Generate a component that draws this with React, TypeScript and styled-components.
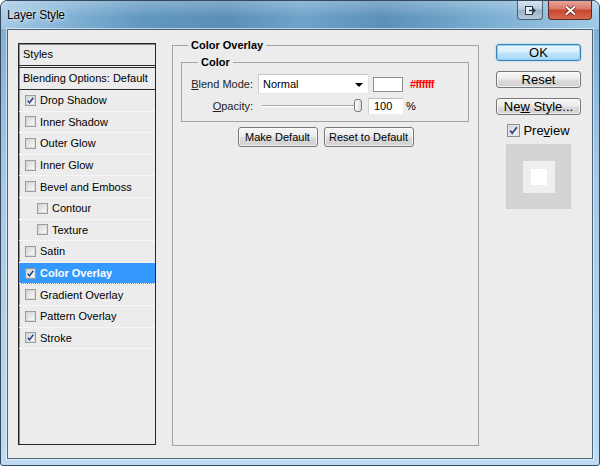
import React from 'react';
import styled, { createGlobalStyle } from 'styled-components';

const GlobalStyle = createGlobalStyle`
  html, body {
    margin: 0;
    padding: 0;
    background: #ffffff;
    overflow: hidden;
  }
  body {
    font-family: "Liberation Sans", Arial, sans-serif;
    font-size: 11px;
    color: #000;
  }
`;

type StyleItem = {
  label: string;
  checked?: boolean;
  indent?: boolean;
  active?: boolean;
};

const styleItems: StyleItem[] = [
  { label: 'Drop Shadow', checked: true },
  { label: 'Inner Shadow' },
  { label: 'Outer Glow' },
  { label: 'Inner Glow' },
  { label: 'Bevel and Emboss' },
  { label: 'Contour', indent: true },
  { label: 'Texture', indent: true },
  { label: 'Satin' },
  { label: 'Color Overlay', checked: true, active: true },
  { label: 'Gradient Overlay' },
  { label: 'Pattern Overlay' },
  { label: 'Stroke', checked: true },
];

const CheckBox = ({ checked, size }: { checked?: boolean; size: number }) => (
  <CheckSvg width={size} height={size} viewBox="0 0 13 13">
    <defs>
      <linearGradient id="cbFill" x1="0" y1="0" x2="1" y2="1">
        <stop offset="0" stopColor="#d6d6d6" />
        <stop offset="1" stopColor="#fbfbfb" />
      </linearGradient>
    </defs>
    <rect x="0.5" y="0.5" width="12" height="12" fill="#f4f4f4" stroke="#8e8f8f" />
    <rect x="2" y="2" width="9" height="9" fill="url(#cbFill)" stroke="#c4c4c4" strokeWidth="0.6" />
    {checked && (
      <path d="M3.2 6.6 L5.3 9.2 L9.8 3.2" fill="none" stroke="#2b3f8f" strokeWidth="1.7" />
    )}
  </CheckSvg>
);

const App = () => {
  return (
    <>
      <GlobalStyle />
      <Window>
        <TitleBar>
          <Title>Layer Style</Title>
          <Controls>
            <RestoreButton>
              <svg width="12" height="11" viewBox="0 0 12 11">
                <rect x="1.5" y="1.5" width="7" height="8" fill="#e9eef3" stroke="#2c3d4e" />
                <path d="M5 5.5 H11 M8.5 3 L11 5.5 L8.5 8" fill="none" stroke="#2c3d4e" strokeWidth="1.3" />
              </svg>
            </RestoreButton>
            <CloseButton>
              <svg width="13" height="11" viewBox="0 0 13 11">
                <path d="M2 1.5 L11 9.5 M11 1.5 L2 9.5" stroke="#5a1c12" strokeWidth="3.6" />
                <path d="M2 1.5 L11 9.5 M11 1.5 L2 9.5" stroke="#ffffff" strokeWidth="2" />
              </svg>
            </CloseButton>
          </Controls>
        </TitleBar>

        <Client>
          <StylesPanel>
            <PanelHeader>Styles</PanelHeader>
            <BlendingRow>Blending Options: Default</BlendingRow>
            {styleItems.map((item) => (
              <StyleRow key={item.label} $active={item.active} $indent={item.indent}>
                <CheckBox checked={item.checked} size={11} />
                <span>{item.label}</span>
              </StyleRow>
            ))}
          </StylesPanel>

          <Group $outer>
            <Legend $outer>Color Overlay</Legend>
            <Group>
              <Legend>Color</Legend>
              <FieldRow>
                <FieldLabel>
                  <u>B</u>lend Mode:
                </FieldLabel>
                <Dropdown>
                  <span>Normal</span>
                  <DropArrow />
                </Dropdown>
                <Swatch />
                <HexValue>#ffffff</HexValue>
              </FieldRow>
              <FieldRow>
                <FieldLabel>
                  <u>O</u>pacity:
                </FieldLabel>
                <Slider>
                  <SliderThumb />
                </Slider>
                <NumberBox>100</NumberBox>
                <Unit>%</Unit>
              </FieldRow>
            </Group>
            <ButtonRow>
              <PushButton $width={80}>Make Default</PushButton>
              <PushButton $width={90}>Reset to Default</PushButton>
            </ButtonRow>
          </Group>

          <SideColumn>
            <DialogButton $primary>OK</DialogButton>
            <DialogButton>Reset</DialogButton>
            <DialogButton>
              <span>
                Ne<u>w</u> Style...
              </span>
            </DialogButton>
            <PreviewToggle>
              <CheckBox checked size={13} />
              <span>
                Pre<u>v</u>iew
              </span>
            </PreviewToggle>
            <PreviewBox>
              <PreviewMid>
                <PreviewCore />
              </PreviewMid>
            </PreviewBox>
          </SideColumn>
        </Client>
      </Window>
    </>
  );
};

const Window = styled.div`
  width: 600px;
  height: 466px;
  box-sizing: border-box;
  display: flex;
  flex-direction: column;
  border: 1px solid #34495d;
  border-radius: 7px 7px 3px 3px;
  overflow: hidden;
  background: linear-gradient(180deg, #7eaad0 0%, #a3c8e6 35%, #bedbf3 100%);
`;

const TitleBar = styled.div`
  height: 28px;
  flex-shrink: 0;
  display: flex;
  align-items: flex-start;
  justify-content: space-between;
  padding-left: 6px;
  background:
    linear-gradient(180deg, rgba(255, 255, 255, 0.25), rgba(255, 255, 255, 0) 60%),
    linear-gradient(
      90deg,
      #a6cbe6 0%,
      #84b4d7 10%,
      #6097c0 24%,
      #5a8fb9 38%,
      #6fa3ca 50%,
      #5b90b9 64%,
      #77abd0 80%,
      #a2cbe7 100%
    );
`;

const Title = styled.div`
  font-size: 12px;
  line-height: 29px;
  color: #000;
  letter-spacing: -0.2px;
  text-shadow: 0 0 6px rgba(255, 255, 255, 0.95), 0 0 2px rgba(255, 255, 255, 0.8);
`;

const Controls = styled.div`
  display: flex;
  gap: 5px;
  margin-right: 7px;
`;

const CaptionButton = styled.div`
  height: 19px;
  box-sizing: border-box;
  display: flex;
  align-items: center;
  justify-content: center;
  border: 1px solid #4b5f73;
  border-top: none;
  border-radius: 0 0 4px 4px;
`;

const RestoreButton = styled(CaptionButton)`
  width: 26px;
  background: linear-gradient(180deg, #d6e4ef 0%, #b9cddd 45%, #9bb3c7 50%, #b4cadb 100%);
`;

const CloseButton = styled(CaptionButton)`
  width: 44px;
  border-color: #5b2a20;
  background: linear-gradient(180deg, #e9a595 0%, #d8786a 45%, #c7452e 50%, #d46a4e 100%);
`;

const Client = styled.div`
  flex: 1;
  margin: 0 6px 6px 6px;
  box-sizing: border-box;
  display: flex;
  align-items: flex-start;
  padding: 13px 0 0 10px;
  background: #ececec;
  border: 1px solid #4c6277;
  box-shadow: 0 0 0 1px rgba(255, 255, 255, 0.55);
`;

const StylesPanel = styled.div`
  width: 138px;
  height: 402px;
  flex-shrink: 0;
  box-sizing: border-box;
  display: flex;
  flex-direction: column;
  border: 1px solid #262626;
  box-shadow: inset 1px 1px 0 #8a8a8a;
`;

const PanelHeader = styled.div`
  height: 21px;
  line-height: 21px;
  padding-left: 4px;
  border-bottom: 1px solid #2e2e2e;
`;

const BlendingRow = styled.div`
  height: 21px;
  line-height: 21px;
  margin-top: 1px;
  padding-left: 4px;
  border-top: 1px solid #2e2e2e;
  border-bottom: 1px solid #2e2e2e;
`;

const StyleRow = styled.div<{ $active?: boolean; $indent?: boolean }>`
  height: 20.6px;
  flex-shrink: 0;
  display: flex;
  align-items: center;
  gap: 4px;
  padding-left: ${(p) => (p.$indent ? 18 : 6)}px;
  border-bottom: 1px dotted #ffffff;
  background: ${(p) => (p.$active ? '#3399ff' : 'transparent')};
  color: ${(p) => (p.$active ? '#ffffff' : '#000000')};
  font-weight: ${(p) => (p.$active ? 'bold' : 'normal')};
`;

const CheckSvg = styled.svg`
  flex-shrink: 0;
  display: block;
`;

const Group = styled.fieldset<{ $outer?: boolean }>`
  margin: ${(p) => (p.$outer ? '-5px 0 0 16px' : '0')};
  width: ${(p) => (p.$outer ? 307 : 288)}px;
  height: ${(p) => (p.$outer ? 408 : 67)}px;
  box-sizing: border-box;
  flex-shrink: 0;
  padding: ${(p) => (p.$outer ? '3px 8px 8px 8px' : '5px 8px 6px 8px')};
  border: 1px solid #a3a3a3;
  display: flex;
  flex-direction: column;
  gap: 4px;
`;

const Legend = styled.legend<{ $outer?: boolean }>`
  margin-left: ${(p) => (p.$outer ? 7 : 8)}px;
  padding: 0 3px;
  font-weight: bold;
  line-height: 14px;
`;

const FieldRow = styled.div`
  display: flex;
  align-items: center;
  height: 20px;

  &:last-of-type {
    height: 16px;
  }
`;

const FieldLabel = styled.div`
  width: 63px;
  flex-shrink: 0;
  text-align: right;
  margin-right: 5px;
  color: #222;
`;

const Dropdown = styled.div`
  width: 111px;
  height: 20px;
  box-sizing: border-box;
  display: flex;
  align-items: center;
  justify-content: space-between;
  padding: 0 5px 0 4px;
  background: #fff;
  border: 1px solid #c9c9c9;
  border-right-color: #e3e3e3;
  border-bottom-color: #e3e3e3;
`;

const DropArrow = styled.span`
  width: 0;
  height: 0;
  border-left: 4px solid transparent;
  border-right: 4px solid transparent;
  border-top: 4px solid #000;
  margin-top: 1px;
`;

const Swatch = styled.div`
  width: 30px;
  height: 15px;
  margin-left: 4px;
  box-sizing: border-box;
  background: #fff;
  border: 1px solid #8f8f8f;
`;

const HexValue = styled.span`
  margin-left: 7px;
  color: #ff0000;
  font-weight: bold;
  letter-spacing: -0.6px;
`;

const Slider = styled.div`
  position: relative;
  width: 96px;
  height: 2px;
  margin-left: 4px;
  border-top: 1px solid #a8a8a8;
  border-bottom: 1px solid #ffffff;
  box-sizing: border-box;
`;

const SliderThumb = styled.span`
  position: absolute;
  right: -4px;
  top: -7px;
  width: 8px;
  height: 13px;
  box-sizing: border-box;
  border: 1px solid #7a7a7a;
  border-radius: 3px;
  background: linear-gradient(90deg, #ffffff, #dcdcdc);
`;

const NumberBox = styled.div`
  width: 35px;
  height: 16px;
  margin-left: 10px;
  box-sizing: border-box;
  padding-left: 5px;
  line-height: 15px;
  background: #fff;
  border-top: 1px solid #bdbdbd;
  border-left: 1px solid #d2d2d2;
`;

const Unit = styled.span`
  margin-left: 3px;
`;

const ButtonRow = styled.div`
  display: flex;
  justify-content: center;
  gap: 6px;
  margin-top: 1px;
`;

const PushButton = styled.div<{ $width: number }>`
  width: ${(p) => p.$width}px;
  height: 20px;
  box-sizing: border-box;
  display: flex;
  align-items: center;
  justify-content: center;
  border: 1px solid #777;
  border-radius: 3px;
  background: linear-gradient(180deg, #f6f6f6 0%, #ebebeb 48%, #dcdcdc 52%, #d0d0d0 100%);
  box-shadow: inset 0 0 0 1px rgba(255, 255, 255, 0.7);
`;

const SideColumn = styled.div`
  width: 85px;
  margin-left: 17px;
  margin-top: 1px;
  flex-shrink: 0;
  display: flex;
  flex-direction: column;
  align-items: center;
  font-size: 13px;
`;

const DialogButton = styled.div<{ $primary?: boolean }>`
  width: 85px;
  height: 17px;
  box-sizing: border-box;
  display: flex;
  align-items: center;
  justify-content: center;
  margin-bottom: 10px;
  border: 1px solid ${(p) => (p.$primary ? '#3c7fb1' : '#777')};
  border-radius: 3px;
  background: ${(p) =>
    p.$primary
      ? 'linear-gradient(180deg, #eaf6fd 0%, #d9f0fc 48%, #bee6fd 52%, #a7d9f5 100%)'
      : 'linear-gradient(180deg, #f6f6f6 0%, #ebebeb 48%, #dcdcdc 52%, #d0d0d0 100%)'};
  box-shadow: ${(p) =>
    p.$primary
      ? 'inset 0 0 0 1px #8fd3fb, 0 0 2px rgba(60, 160, 230, 0.5)'
      : 'inset 0 0 0 1px rgba(255, 255, 255, 0.7)'};
`;

const PreviewToggle = styled.div`
  height: 16px;
  margin-top: -3px;
  display: flex;
  align-items: center;
  gap: 3px;
`;

const PreviewBox = styled.div`
  width: 65px;
  height: 65px;
  margin-top: 6px;
  box-sizing: border-box;
  display: flex;
  align-items: center;
  justify-content: center;
  border: 1px solid #d0d0d0;
  background-color: #d8d8d8;
  background-image:
    linear-gradient(45deg, #cfcfcf 25%, transparent 25%, transparent 75%, #cfcfcf 75%),
    linear-gradient(45deg, #cfcfcf 25%, transparent 25%, transparent 75%, #cfcfcf 75%);
  background-size: 2px 2px;
  background-position: 0 0, 1px 1px;
`;

const PreviewMid = styled.div`
  width: 32px;
  height: 32px;
  display: flex;
  align-items: center;
  justify-content: center;
  background: #efefef;
`;

const PreviewCore = styled.div`
  width: 16px;
  height: 16px;
  background: #ffffff;
`;

export default App;
